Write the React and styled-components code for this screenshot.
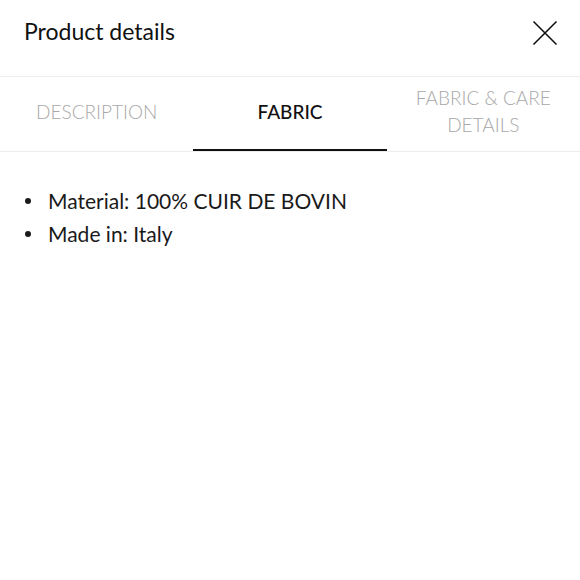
import React, { useState } from 'react';
import styled, { createGlobalStyle } from 'styled-components';

const GlobalStyle = createGlobalStyle`
  html, body {
    margin: 0;
    padding: 0;
    background: #fff;
    font-family: Lato, "Noto Sans", sans-serif;
    color: #111;
  }
`;

const Page = styled.div`
  width: 580px;
  height: 580px;
  background: #fff;
  display: flex;
  flex-direction: column;
`;

const Header = styled.header`
  height: 77px;
  display: flex;
  align-items: flex-start;
  justify-content: space-between;
  padding: 0 22px 0 24px;
  box-sizing: border-box;
  border-bottom: 1px solid #ececec;
`;

const Title = styled.h1`
  margin: 17px 0 0;
  font-size: 23px;
  font-weight: 400;
  color: #111;
`;

const CloseButton = styled.button`
  margin-top: 20px;
  width: 26px;
  height: 26px;
  padding: 0;
  border: none;
  background: transparent;
  cursor: pointer;
  display: flex;
  align-items: center;
  justify-content: center;
`;

const Tabs = styled.nav`
  display: grid;
  grid-template-columns: repeat(3, 1fr);
  height: 74px;
  border-bottom: 1px solid #ececec;
`;

const Tab = styled.button`
  border: none;
  background: transparent;
  padding: 0 20px 4px;
  font-family: inherit;
  font-size: 19px;
  line-height: 27px;
  text-transform: uppercase;
  font-weight: ${({ active }) => (active ? 500 : 300)};
  color: ${({ active }) => (active ? '#111' : '#a8a8a8')};
  border-bottom: 2px solid ${({ active }) => (active ? '#111' : 'transparent')};
  cursor: pointer;
`;

const List = styled.ul`
  list-style: none;
  margin: 32px 0 0;
  padding: 0 0 0 25px;
  font-size: 21px;
  line-height: 33px;
  color: #1a1a1a;
`;

const Item = styled.li`
  display: flex;
  align-items: center;

  &::before {
    content: '';
    width: 6px;
    height: 6px;
    border-radius: 50%;
    background: #1a1a1a;
    margin-right: 17px;
    flex-shrink: 0;
  }
`;

const tabs = ['Description', 'Fabric', 'Fabric & care details'];

export default function App() {
  const [active, setActive] = useState(1);
  return (
    <Page>
      <GlobalStyle />
      <Header>
        <Title>Product details</Title>
        <CloseButton aria-label="Close">
          <svg width="26" height="26" viewBox="0 0 26 26">
            <path d="M1.5 1.5 L24.5 24.5 M24.5 1.5 L1.5 24.5" stroke="#111" strokeWidth="1.6" fill="none" />
          </svg>
        </CloseButton>
      </Header>
      <Tabs>
        {tabs.map((t, i) => (
          <Tab key={t} active={i === active} onClick={() => setActive(i)}>
            {t}
          </Tab>
        ))}
      </Tabs>
      <List>
        <Item>Material: 100% CUIR DE BOVIN</Item>
        <Item>Made in: Italy</Item>
      </List>
    </Page>
  );
}
